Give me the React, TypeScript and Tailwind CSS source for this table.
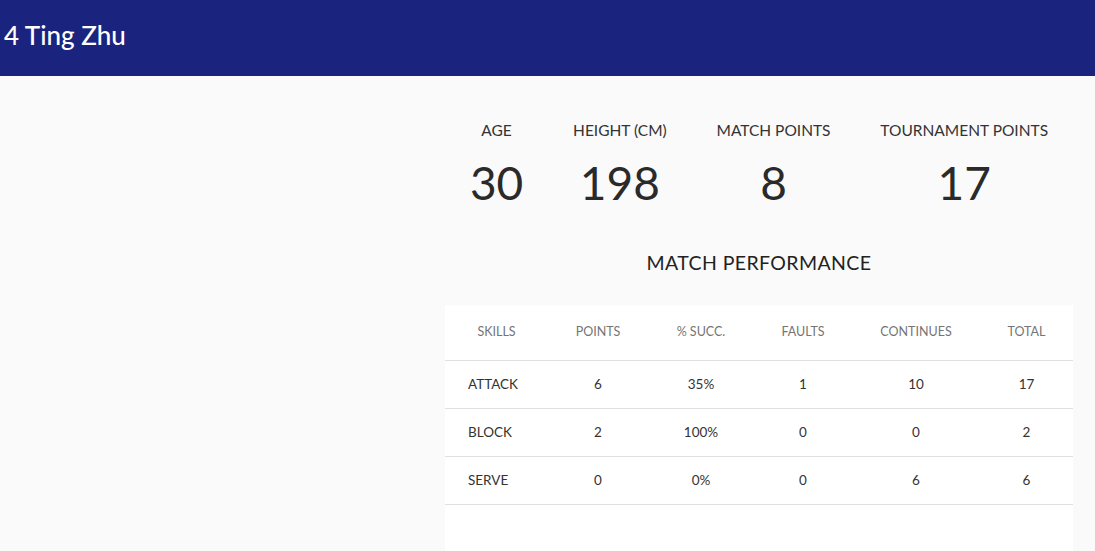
const stats = [
  { label: 'Age', value: '30' },
  { label: 'Height (cm)', value: '198' },
  { label: 'Match points', value: '8' },
  { label: 'Tournament points', value: '17' },
];

const columns = [
  { key: 'skill', label: 'Skills', width: 'w-[103px]' },
  { key: 'points', label: 'Points', width: 'w-[100px]' },
  { key: 'succ', label: '% Succ.', width: 'w-[106px]' },
  { key: 'faults', label: 'Faults', width: 'w-[98px]' },
  { key: 'continues', label: 'Continues', width: 'w-[128px]' },
  { key: 'total', label: 'Total', width: 'w-[93px]' },
];

const rows = [
  ['Attack', '6', '35%', '1', '10', '17'],
  ['Block', '2', '100%', '0', '0', '2'],
  ['Serve', '0', '0%', '0', '6', '6'],
];

export default function App() {
  return (
    <div className="h-[551px] overflow-hidden bg-[#fafafa] font-['Lato','Noto_Sans',sans-serif] text-[#333]">
      <header className="flex h-[76px] items-center bg-[#1a237e] px-1 pb-[6px]">
        <h1 className="text-[26px] font-medium leading-none text-white">4 Ting Zhu</h1>
      </header>
      <div className="grid grid-cols-[445px_628px]">
        <div />
        <section>
          <div className="mt-[42px] flex justify-around">
            {stats.map((s) => (
              <div key={s.label} className="flex flex-col items-center">
                <p className="text-[15.5px] uppercase leading-[24px] text-[#333]">{s.label}</p>
                <p className="mt-[16px] text-[46px] font-normal leading-[50px] text-[#2a2a2a]">{s.value}</p>
              </div>
            ))}
          </div>
          <h2 className="mt-[40px] text-center text-[19.5px] uppercase tracking-[0.02em] text-[#222]">
            Match performance
          </h2>
          <div className="mt-[28px] h-[260px] bg-white">
            <table className="w-full border-collapse text-center">
              <thead>
                <tr className="h-[55px] border-b border-[#e0e0e0]">
                  {columns.map((c) => (
                    <th key={c.key} className={`${c.width} text-[12.5px] font-normal uppercase text-[#757575]`}>
                      {c.label}
                    </th>
                  ))}
                </tr>
              </thead>
              <tbody>
                {rows.map((r) => (
                  <tr key={r[0]} className="h-[48px] border-b border-[#e0e0e0] text-[13.5px] text-[#333]">
                    {r.map((cell, i) => (
                      <td key={i} className={i === 0 ? 'pl-[23px] text-left uppercase' : ''}>
                        {cell}
                      </td>
                    ))}
                  </tr>
                ))}
              </tbody>
            </table>
          </div>
        </section>
      </div>
    </div>
  );
}
